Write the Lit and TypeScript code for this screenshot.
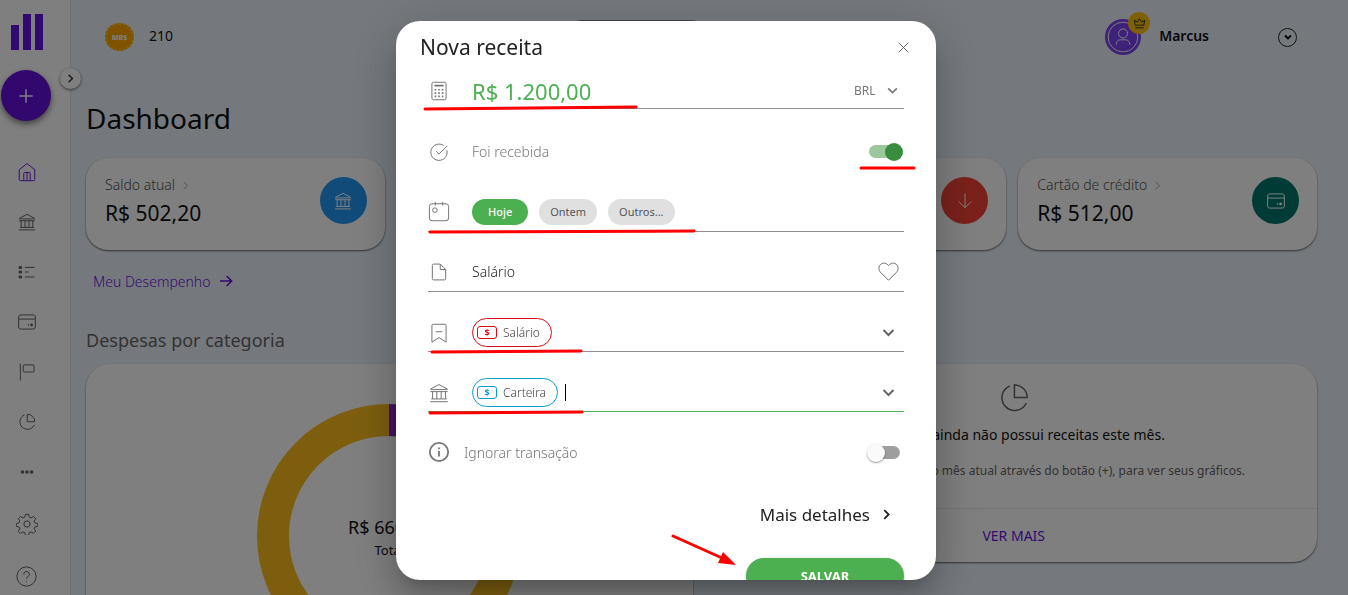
import { LitElement, html, css, svg } from "lit";
import { customElement, property, state } from "lit/decorators.js";
import { classMap } from "lit/directives/class-map.js";

const glyphs: Record<string, unknown> = {
  home: svg`<path d="M3.5 9.5 12 2.8l8.500 6.700V20a1.500 1.500 0 0 1-1.500 1.500H5A1.500 1.500 0 0 1 3.500 20Z"/><path d="M8.500 21.500v-8a1 1 0 0 1 1-1h5a1 1 0 0 1 1 1v8M12 12.500v9"/>`,
  bank: svg`<path d="M3 7.500 12 2.800l9 4.700v.8H3ZM2.500 10.500h19M5 10.500v8M9.600 10.500v8M14.400 10.500v8M19 10.500v8M3.500 18.500h17M2.500 21.500h19"/>`,
  list: svg`<path d="M9.500 6.500H21M9.500 12h4.500M9.500 18H21"/><path d="M3.500 6.500h1M3.500 12h1M3.500 18h1" stroke-width="3.600" stroke-linecap="round"/>`,
  card: svg`<rect x="2" y="3.500" width="20" height="17" rx="2.500"/><path d="M2 8.500h20"/><circle cx="17.500" cy="15.500" r="1.200" fill="currentColor"/><circle cx="13.800" cy="15.500" r=".5" fill="currentColor"/>`,
  flag: svg`<path d="M4 2v20M8.500 3.500h11a1 1 0 0 1 1 1V11a1 1 0 0 1-1 1h-11a1 1 0 0 1-1-1V4.500a1 1 0 0 1 1-1Z"/>`,
  pie: svg`<path d="M9 3.500A9 9 0 1 0 20.700 15.500"/><path d="M12.300 2.700a9 9 0 0 1 9 9h-9Z"/>`,
  dots: svg`<path d="M6.500 12h.01M12 12h.01M17.500 12h.01" stroke-width="4.400" stroke-linecap="round"/>`,
  gear: svg`<path d="M10.300 1.500h3.400l.7 3 2 .85 2.650-1.600 2.400 2.400-1.600 2.650.85 2 3 .7v3l-3 .7-.85 2 1.600 2.650-2.400 2.400-2.650-1.600-2 .85-.7 3h-3.400l-.7-3-2-.85-2.650 1.600-2.400-2.400 1.600-2.650-.85-2-3-.7v-3l3-.7.85-2-1.600-2.650 2.400-2.400L7.600 5.350l2-.85Z" stroke-linejoin="round"/><circle cx="12" cy="12" r="3.400"/>`,
  help: svg`<circle cx="12" cy="12" r="11"/><path d="M8.800 9.500a3.200 3.200 0 1 1 4.800 2.700c-1 .6-1.600 1.100-1.600 2.300M12 17v1"/>`,
  plus: svg`<path d="M12 4v16M4 12h16"/>`,
  right: svg`<path d="m8.500 5 7 7-7 7"/>`,
  down: svg`<path d="m5 8.500 7 7 7-7"/>`,
  arrowRight: svg`<path d="M3 12h17M13 4.500l7.500 7.500-7.500 7.500"/>`,
  arrowDown: svg`<path d="M12 2v19M3.500 12.500 12 21l8.500-8.500"/>`,
  close: svg`<path d="m3 3 18 18M21 3 3 21"/>`,
  user: svg`<circle cx="12" cy="12" r="10.500"/><circle cx="12" cy="9.500" r="3.200"/><path d="M7.200 17.500c0-2.200 1.200-3.500 3-3.500h3.600c1.800 0 3 1.300 3 3.500"/>`,
  crown: svg`<path d="m4 15-1.500-9L8 9.500 12 3l4 6.500L21.500 6 20 15ZM4.500 20h15"/>`,
  calc: svg`<rect x="3.500" y="1.500" width="17" height="21" rx="1.800"/><path d="M6.500 5.500h11" stroke-width="2"/><path d="M6.700 10.500h2M11 10.500h2M15.300 10.500h2M6.700 14.500h2M11 14.500h2M15.300 14.500h2M6.700 18.500h2M11 18.500h2M15.300 18.500h2" stroke-width="2"/>`,
  check: svg`<path d="M17.500 4.200A9.800 9.800 0 1 0 21.500 10"/><path d="m8.500 11 3.500 3.500L22 4.500"/>`,
  calendar: svg`<rect x="1.500" y="3" width="21" height="18.500" rx="3"/><path d="M8 1v4M16 1v4"/><circle cx="7.500" cy="10" r="2.500"/>`,
  file: svg`<path d="M13.500 2.500h-8A1.500 1.500 0 0 0 4 4v16a1.500 1.500 0 0 0 1.500 1.500h13A1.500 1.500 0 0 0 20 20V9ZM13.500 2.500V9H20"/>`,
  bookmark: svg`<path d="M3.500 23V3A1.500 1.500 0 0 1 5 1.500h14A1.500 1.500 0 0 1 20.500 3v20L12 17.500ZM8 10.500h8"/>`,
  heart: svg`<path d="M12 22 2.700 12.700C.4 10.200.6 6.300 2.700 4.200 5.300 1.600 9.500 1.900 12 5.200c2.500-3.300 6.700-3.600 9.300-1 2.100 2.100 2.300 6 0 8.500Z"/>`,
  info: svg`<circle cx="12" cy="12" r="10"/><path d="M12 11v6M12 7v2"/>`,
};

@customElement("ui-icon")
class UiIcon extends LitElement {
  @property() name = "";
  @property({ type: Number }) size = 20;
  @property({ type: Number }) weight = 1;

  static styles = css`
    :host { display: inline-flex; flex: none; }
    .glyph { display: block; fill: none; stroke: currentColor; }
  `;

  render() {
    return html`<svg class="glyph" viewBox="0 0 24 24" width=${this.size} height=${this.size}
      stroke-width=${(this.weight * 24) / this.size} aria-hidden="true">${glyphs[this.name]}</svg>`;
  }
}

@customElement("money-chip")
class MoneyChip extends LitElement {
  @property() label = "";
  @property() tone = "red";

  static styles = css`
    :host { display: inline-flex; flex: none; }
    .chip {
      display: flex; align-items: center; gap: 6px; box-sizing: border-box; height: 29px;
      padding: 0 11px 0 4px; border: 1px solid currentColor; border-radius: 15px;
    }
    .red { color: #d50c16; }
    .blue { color: #0d9bd0; }
    .bill {
      display: flex; align-items: center; justify-content: center; box-sizing: border-box;
      width: 20px; height: 13px; border: 1px solid currentColor; border-radius: 3px;
      font-size: 9px; font-weight: 700;
    }
    .label { color: #444; font-size: 12px; font-weight: 300; }
  `;

  render() {
    return html`<span class=${classMap({ chip: true, [this.tone]: true })}>
      <span class="bill">$</span><span class="label">${this.label}</span>
    </span>`;
  }
}

@customElement("stat-card")
class StatCard extends LitElement {
  @property() label = "";
  @property() value = "";
  @property() icon = "";
  @property() tone = "";

  static styles = css`
    :host {
      display: flex; justify-content: space-between; align-items: flex-start;
      box-sizing: border-box; height: 92px; padding: 19px 18px 0 19px; background: #fff;
      border-radius: 22px; box-shadow: 0 1px 2px rgba(0, 0, 0, 0.6);
    }
    .label { display: flex; align-items: center; gap: 4px; line-height: 16px; font-size: 14px; font-weight: 300; color: #555; }
    .chev { color: #aaa; }
    .value { margin-top: 6px; font-size: 21px; line-height: 28px; color: #111; }
    .badge { display: grid; place-items: center; width: 47px; height: 47px; border-radius: 50%; color: #fff; }
    .blue { background: #2196f3; }
    .green { background: #4caf50; }
    .red { background: #f44336; }
    .teal { background: #00796b; }
  `;

  render() {
    return html`
      <div>
        <div class="label">${this.label}<ui-icon class="chev" name="right" size="13"></ui-icon></div>
        <div class="value">${this.value}</div>
      </div>
      <div class=${classMap({ badge: true, [this.tone]: true })}>
        <ui-icon name=${this.icon} size=${this.icon === "arrowDown" ? 18 : 20}></ui-icon>
      </div>`;
  }
}

@customElement("income-dialog")
class IncomeDialog extends LitElement {
  @state() private day = "Hoje";

  static styles = css`
    :host {
      position: relative; display: block; box-sizing: border-box; width: 540px; max-width: 100%;
      height: 100%; overflow: hidden; background: #fff; color: #222; border-radius: 24px;
      box-shadow: 0 11px 15px -7px rgba(0,0,0,.2), 0 24px 38px 3px rgba(0,0,0,.14), 0 9px 46px 8px rgba(0,0,0,.12);
    }
    button, input, select { font: inherit; color: inherit; border: 0; background: none; padding: 0; margin: 0; outline: 0; }
    button { cursor: pointer; }
    .head { display: flex; justify-content: space-between; align-items: center; height: 52px; padding: 0 26px 0 24px; }
    .title { margin: 0; font-size: 21px; line-height: 24px; font-weight: 400; }
    .close, .end { display: flex; color: #666; }
    .form { padding: 0 32px; }
    .row { display: flex; align-items: center; gap: 22px; box-sizing: border-box; height: 60px; padding-top: 20px; border-bottom: 1px solid #8e8e8e; }
    .row.amount { height: 36px; padding-top: 0; }
    .row.toggle { height: 63px; padding-top: 22px; border: 0; }
    .row.tags { padding-top: 22px; }
    .row.option { padding-top: 20px; border: 0; gap: 14px; }
    .row.active { border-color: #4caf50; }
    .lead { display: flex; justify-content: center; width: 22px; flex: none; color: #757575; }
    .field { flex: 1; min-width: 0; }
    .money { font-size: 22px; color: #4caf50; }
    .text { font-size: 14px; font-weight: 300; }
    .muted { font-size: 14px; font-weight: 300; color: #777; }
    .end { padding-right: 5px; }
    .tags .end { padding-right: 7px; }
    .currency { display: flex; align-items: center; gap: 9px; padding-right: 4px; color: #777; font-size: 12px; }
    .currency select { appearance: none; }
    .chips { display: flex; gap: 11px; flex: 1; }
    .day { height: 26px; padding: 0 11px; border-radius: 13px; background: #e0e0e0; color: #555; font-size: 11px; }
    .day.on { padding: 0 16px; background: #4caf50; color: #fff; font-weight: 500; }
    .picked { display: flex; align-items: center; gap: 7px; flex: 1; min-width: 0; }
    .caret { width: 1px; height: 17px; background: #000; }
    .switch {
      appearance: none; position: relative; width: 31px; height: 13px; margin-right: 4px;
      border-radius: 7px; background: #9e9e9e;
    }
    .switch::before {
      content: ""; position: absolute; top: -2px; left: -2px; width: 18px; height: 18px;
      border-radius: 50%; background: #fafafa; box-shadow: 0 1px 2px rgba(0, 0, 0, 0.4);
    }
    .switch:checked { background: #9bc79d; }
    .switch:checked::before { left: 16px; background: #388e3c; box-shadow: none; }
    .foot { display: flex; flex-direction: column; align-items: flex-end; }
    .more { display: flex; align-items: center; gap: 9px; height: 86px; padding: 0 10px 2px 0; font-size: 17px; }
    .save { width: 158px; height: 36px; border-radius: 18px; background: #4caf50; color: #fff; font-size: 13px; font-weight: 700; box-shadow: 0 1px 3px rgba(0, 0, 0, 0.3); }
    .marks { position: absolute; top: 0; left: 0; width: 540px; height: 559px; pointer-events: none; }
  `;

  render() {
    return html`
      <div class="head">
        <h2 class="title">Nova receita</h2>
        <button class="close" aria-label="Fechar"><ui-icon name="close" size="13"></ui-icon></button>
      </div>
      <div class="form">
        <div class="row amount">
          <span class="lead"><ui-icon name="calc" size="20"></ui-icon></span>
          <input class="field money" aria-label="Valor" value="R$ 1.200,00" />
          <div class="currency">
            <select aria-label="Moeda"><option>BRL</option></select>
            <ui-icon name="down" size="15" weight="1.6"></ui-icon>
          </div>
        </div>
        <div class="row toggle">
          <span class="lead"><ui-icon name="check" size="20"></ui-icon></span>
          <label class="field muted" for="received">Foi recebida</label>
          <input class="switch" id="received" type="checkbox" checked />
        </div>
        <div class="row">
          <span class="lead"><ui-icon name="calendar" size="22"></ui-icon></span>
          <div class="chips">
            ${["Hoje", "Ontem", "Outros..."].map(
              (d) => html`<button class=${classMap({ day: true, on: this.day === d })}
                @click=${() => (this.day = d)}>${d}</button>`
            )}
          </div>
        </div>
        <div class="row">
          <span class="lead"><ui-icon name="file" size="20"></ui-icon></span>
          <input class="field text" aria-label="Descrição" value="Salário" />
          <button class="end" aria-label="Favoritar"><ui-icon name="heart" size="21"></ui-icon></button>
        </div>
        <div class="row tags">
          <span class="lead"><ui-icon name="bookmark" size="20"></ui-icon></span>
          <div class="picked">
            <money-chip label="Salário" tone="red"></money-chip>
            <input class="field" aria-label="Categoria" />
          </div>
          <button class="end" aria-label="Abrir categorias"><ui-icon name="down" size="17" weight="2"></ui-icon></button>
        </div>
        <div class="row tags active">
          <span class="lead"><ui-icon name="bank" size="22"></ui-icon></span>
          <div class="picked">
            <money-chip label="Carteira" tone="blue"></money-chip>
            <span class="caret"></span>
            <input class="field" aria-label="Conta" />
          </div>
          <button class="end" aria-label="Abrir contas"><ui-icon name="down" size="17" weight="2"></ui-icon></button>
        </div>
        <div class="row option">
          <span class="lead"><ui-icon name="info" size="22" weight="1.8"></ui-icon></span>
          <label class="field muted" for="ignored">Ignorar transação</label>
          <input class="switch" id="ignored" type="checkbox" />
        </div>
        <div class="foot">
          <button class="more">Mais detalhes <ui-icon name="right" size="15" weight="1.8"></ui-icon></button>
          <button class="save">SALVAR</button>
        </div>
      </div>
      <svg class="marks" viewBox="0 0 540 559" fill="none" stroke="#f00" stroke-width="3" stroke-linecap="round" aria-hidden="true">
        <path d="M29 88 240 86M465 147H518M34 211 298 210M36 331 185 330M34 392 186 391M277 515 326 537" />
        <path d="m340 544-18-2 5-11Z" fill="#f00" stroke="none" />
      </svg>`;
  }
}

@customElement("app-root")
class AppRoot extends LitElement {
  static styles = css`
    :host {
      display: grid; grid-template-columns: 71px minmax(0, 1fr); height: 100vh; overflow: hidden;
      background: #ebf3fd; color: #111; font-family: "Noto Sans", "Open Sans", sans-serif;
    }
    button { font: inherit; border: 0; padding: 0; cursor: pointer; }
    a { text-decoration: none; }
    .side { position: relative; display: flex; flex-direction: column; background: #fff; border-right: 1px solid #e2e2e2; box-sizing: border-box; padding-top: 14px; }
    .side > * { margin-left: 1px; }
    .side > .logo { width: 32px; height: 36px; margin-left: 11px; fill: #6412e0; }
    .add { display: grid; place-items: center; width: 50px; height: 51px; margin-top: 20px; border-radius: 50%; background: #6410dc; color: #fff; box-shadow: 0 3px 6px rgba(0, 0, 0, 0.5); }
    .expand { position: absolute; top: 68px; right: -11px; display: grid; place-items: center; width: 21px; height: 21px; border-radius: 50%; background: #fff; color: #333; box-shadow: 0 1px 3px rgba(0, 0, 0, 0.6); }
    .nav { display: grid; grid-auto-rows: 50px; width: 51px; padding-top: 26px; }
    .nav.extra { grid-auto-rows: 52px; padding-top: 1px; }
    .link { display: grid; place-items: center; color: #666; }
    .link.on { color: #6a1be0; }
    .main { padding: 0 31px 0 15px; }
    .top { display: flex; align-items: center; height: 74px; padding: 0 20px 0 19px; }
    .coin { display: grid; place-items: center; box-sizing: border-box; width: 29px; height: 28px; border-radius: 50%; background: #ffa400; border: 2px dotted #ffc21a; color: #fff; font-size: 7px; font-weight: 800; }
    .points { margin-left: 15px; font-size: 14px; line-height: 20px; padding-bottom: 2px; }
    .promo { width: 127px; height: 34px; margin: 0 auto 0 400px; border-radius: 8px; background: #8c8494; }
    .avatar { position: relative; display: grid; place-items: center; width: 36px; height: 36px; border-radius: 50%; background: #7c44f2; color: #fff; }
    .crown { position: absolute; top: -7px; right: -9px; display: grid; place-items: center; width: 22px; height: 22px; border-radius: 50%; background: #ffc107; color: #333; }
    .name { margin: 0 69px 0 18px; font-size: 14px; line-height: 20px; padding-bottom: 2px; font-weight: 600; }
    .menu { display: grid; place-items: center; box-sizing: border-box; width: 19px; height: 19px; border: 1px solid #222; border-radius: 50%; background: none; }
    .heading { margin: 0; height: 84px; padding-top: 25px; box-sizing: border-box; font-size: 28px; line-height: 38px; font-weight: 400; }
    .stats { display: grid; grid-template-columns: repeat(4, 1fr); gap: 12px; }
    .perf { display: inline-flex; align-items: center; gap: 8px; height: 62px; margin-left: 7px; color: #6a14e0; font-size: 14px; font-weight: 300; }
    .sub { margin: 0; height: 52px; padding-top: 16px; box-sizing: border-box; font-size: 18px; line-height: 24px; font-weight: 400; color: #666; }
    .charts { display: grid; grid-template-columns: repeat(2, 1fr); gap: 18px; align-items: start; }
    .panel { background: #fff; border-radius: 24px; box-shadow: 0 1px 2px rgba(0, 0, 0, 0.6); }
    .spend { display: grid; justify-items: center; padding: 40px 0; }
    .ring, .sum { grid-area: 1 / 1; }
    .ring { width: 264px; height: 264px; }
    .sum { align-self: center; padding-top: 4px; text-align: center; font-size: 18px; line-height: 24px; }
    .sum small { display: block; font-size: 13px; line-height: 22px; }
    .empty { text-align: center; }
    .note { display: grid; justify-items: center; height: 145px; box-sizing: border-box; padding-top: 17px; border-bottom: 1px solid #e8e8e8; align-content: start; }
    .note ui-icon { color: #666; }
    .note p { margin: 0; line-height: 24px; }
    .lead { padding-top: 8px; font-size: 14px; }
    .hint { padding-top: 12px; font-size: 12px; color: #666; }
    .all { display: block; line-height: 53px; font-size: 14px; color: #6a14e0; }
    .veil { position: fixed; inset: 0; display: flex; justify-content: center; box-sizing: border-box; padding: 21px 16px 15px; background: rgba(0, 0, 0, 0.5); }
    .dialog { margin-right: 16px; }
  `;

  private item(name: string, label: string, size: number, on = false) {
    return html`<a class=${classMap({ link: true, on })} href="#" aria-label=${label}>
      <ui-icon name=${name} size=${size}></ui-icon></a>`;
  }

  render() {
    return html`
      <aside class="side">
        <svg class="logo" viewBox="0 0 32 36" aria-hidden="true">
          <path d="M0 11h8v25H0ZM12 0h8v36h-8ZM24 0h8v36h-8Z" />
        </svg>
        <button class="add" aria-label="Adicionar"><ui-icon name="plus" size="20" weight="1.5"></ui-icon></button>
        <button class="expand" aria-label="Expandir menu"><ui-icon name="right" size="13" weight="1.5"></ui-icon></button>
        <nav class="nav">
          ${this.item("home", "Início", 22, true)} ${this.item("bank", "Contas", 20)}
          ${this.item("list", "Transações", 20)} ${this.item("card", "Cartões", 20)}
          ${this.item("flag", "Objetivos", 20)} ${this.item("pie", "Relatórios", 20)}
          ${this.item("dots", "Mais", 20)}
        </nav>
        <nav class="nav extra">
          ${this.item("gear", "Configurações", 22)} ${this.item("help", "Ajuda", 21)}
        </nav>
      </aside>
      <main class="main">
        <header class="top">
          <span class="coin">MB$</span>
          <span class="points">210</span>
          <span class="promo"></span>
          <span class="avatar">
            <ui-icon name="user" size="34"></ui-icon>
            <span class="crown"><ui-icon name="crown" size="13"></ui-icon></span>
          </span>
          <span class="name">Marcus</span>
          <button class="menu" aria-label="Abrir perfil"><ui-icon name="down" size="10" weight="2"></ui-icon></button>
        </header>
        <h1 class="heading">Dashboard</h1>
        <section class="stats">
          <stat-card label="Saldo atual" value="R$ 502,20" icon="bank" tone="blue"></stat-card>
          <stat-card label="Receitas" value="R$ 0,00" icon="plus" tone="green"></stat-card>
          <stat-card label="Despesas" value="R$ 660,00" icon="arrowDown" tone="red"></stat-card>
          <stat-card label="Cartão de crédito" value="R$ 512,00" icon="card" tone="teal"></stat-card>
        </section>
        <a class="perf" href="#">Meu Desempenho <ui-icon name="arrowRight" size="16" weight="1.6"></ui-icon></a>
        <h2 class="sub">Despesas por categoria</h2>
        <section class="charts">
          <div class="panel spend">
            <svg class="ring" viewBox="0 0 264 264" fill="none" stroke-width="32" aria-hidden="true">
              <circle cx="132" cy="132" r="116" stroke="#fbbd1f" />
              <path d="M132 16A116 116 0 0 1 214 50" stroke="#9020c8" />
            </svg>
            <div class="sum">R$ 660,00<small>Total</small></div>
          </div>
          <div class="panel empty">
            <div class="note">
              <ui-icon name="pie" size="34" weight="1.5"></ui-icon>
              <p class="lead">Opa! Você ainda não possui receitas este mês.</p>
              <p class="hint">Adicione os seus ganhos no mês atual através do botão (+), para ver seus gráficos.</p>
            </div>
            <a class="all" href="#">VER MAIS</a>
          </div>
        </section>
      </main>
      <div class="veil"><income-dialog class="dialog" role="dialog" aria-modal="true" aria-label="Nova receita"></income-dialog></div>`;
  }
}
